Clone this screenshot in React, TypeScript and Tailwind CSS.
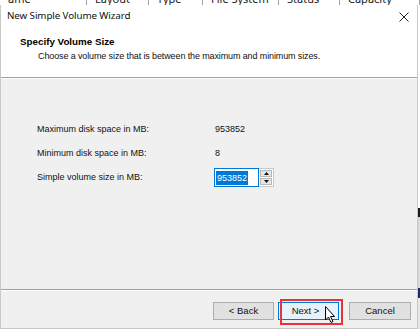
import React from "react";

export default function App() {
  const cols = [
    { w: 87, t: "ame" },
    { w: 62, t: "Layout" },
    { w: 54, t: "Type" },
    { w: 76, t: "File System" },
    { w: 61, t: "Status" },
    { w: 80, t: "Capacity" },
  ];
  return (
    <div
      className="w-[420px] h-[329px] overflow-hidden bg-[#f0f0f0] flex flex-col"
      style={{ fontFamily: '"Liberation Sans", Arial, sans-serif' }}
    >
      {/* background table header strip */}
      <div className="h-[5px] overflow-hidden flex bg-white shrink-0">
        {cols.map((c, i) => (
          <div
            key={i}
            className="shrink-0 border-r border-[#a0a0a0] text-[11px] leading-[13px] text-[#222] -mt-[8px] pl-[8px]"
            style={{ width: c.w, fontFamily: '"Noto Sans", sans-serif' }}
          >
            {c.t}
          </div>
        ))}
      </div>
      <div className="flex flex-1 min-h-0">
        {/* dialog */}
        <div className="w-[418px] flex flex-col border-l border-r border-b border-[#c8c8c8] bg-white">
          {/* title bar */}
          <div className="h-[23px] flex items-center justify-between pl-[6px] pr-[8px] shrink-0">
            <span
              className="text-[9.8px] text-[#111] tracking-[-0.1px]"
              style={{ fontFamily: '"Noto Sans", sans-serif' }}
            >
              New Simple Volume Wizard
            </span>
            <svg width="10" height="10" viewBox="0 0 10 10" className="mt-[1px]">
              <path d="M0.5 0.5 L9.5 9.5 M9.5 0.5 L0.5 9.5" stroke="#222" strokeWidth="1" />
            </svg>
          </div>
          {/* header */}
          <div className="h-[49px] shrink-0 flex flex-col pl-[19px] pt-[7px]">
            <div className="text-[9.8px] font-bold text-black leading-[13px]">Specify Volume Size</div>
            <div className="text-[9px] text-[#111] leading-[13px] pl-[18px] mt-[2px] tracking-[-0.12px]">
              Choose a volume size that is between the maximum and minimum sizes.
            </div>
          </div>
          <div className="h-px bg-[#a0a0a0] shrink-0" />
          <div className="h-px bg-white shrink-0" />
          {/* body */}
          <div className="flex-1 bg-[#f0f0f0] flex flex-col pl-[36px] pt-[44px] text-[9px] text-[#111]">
            <div className="flex items-center h-[14px]">
              <span className="w-[178px]">Maximum disk space in MB:</span>
              <span>953852</span>
            </div>
            <div className="flex items-center h-[14px] mt-[10px]">
              <span className="w-[178px]">Minimum disk space in MB:</span>
              <span>8</span>
            </div>
            <div className="flex items-center mt-[7px]">
              <span className="w-[177px]">Simple volume size in MB:</span>
              <div className="flex">
                <div className="w-[45px] h-[19px] bg-white border border-[#0078d7] flex items-center pl-[1px]">
                  <span className="bg-[#0078d7] text-white leading-[14px] px-px">953852</span>
                </div>
                <div className="w-[15px] h-[19px] flex flex-col gap-px bg-white border border-[#c8c8c8] border-l-0 p-px">
                  <div className="flex-1 bg-[#e5e5e5] border border-[#b8b8b8] flex items-center justify-center">
                    <svg width="5" height="3" viewBox="0 0 5 3"><path d="M2.5 0 L5 3 L0 3 Z" fill="#111" /></svg>
                  </div>
                  <div className="flex-1 bg-[#e5e5e5] border border-[#b8b8b8] flex items-center justify-center">
                    <svg width="5" height="3" viewBox="0 0 5 3"><path d="M0 0 L5 0 L2.5 3 Z" fill="#111" /></svg>
                  </div>
                </div>
              </div>
            </div>
          </div>
          <div className="h-px bg-[#a0a0a0] shrink-0" />
          <div className="h-px bg-white shrink-0" />
          {/* buttons */}
          <div className="h-[37px] shrink-0 bg-[#f0f0f0] flex items-start pt-[11px] pl-[212px] text-[9.5px] text-[#111]">
            <div className="w-[61px] h-[18px] bg-[#e1e1e1] border border-[#adadad] flex items-center justify-center">
              &lt; Back
            </div>
            <div className="relative ml-[4px] w-[61px] h-[18px] bg-[#e5f1fb] border border-[#0078d7] flex items-center justify-center">
              <span className="pr-[6px]">Next &gt;</span>
              <div className="absolute left-[1px] -top-[4px] w-[63px] h-[26px] border-2 border-[#e8333a]" />
              <svg
                className="absolute left-[46px] top-[3px]"
                width="12"
                height="18"
                viewBox="0 0 12 18"
              >
                <path d="M0.5 0.5 L0.5 14 L3.5 11 L6 16.5 L8 15.5 L5.5 10.5 L9.5 10.5 Z" fill="#fff" stroke="#000" strokeWidth="1" strokeLinejoin="round" />
              </svg>
            </div>
            <div className="ml-[10px] w-[62px] h-[18px] bg-[#e1e1e1] border border-[#adadad] flex items-center justify-center">
              Cancel
            </div>
          </div>
        </div>
        {/* background right strip */}
        <div className="flex-1 bg-white flex flex-col">
          <div className="h-[203px] bg-white" />
          <div className="h-[9px] bg-[#1a1a1a]" />
          <div className="h-[71px] bg-[#d8d8d8]" />
          <div className="h-[10px] bg-[#1c2a6a]" />
          <div className="flex-1 bg-[#e8e8e8]" />
        </div>
      </div>
    </div>
  );
}
